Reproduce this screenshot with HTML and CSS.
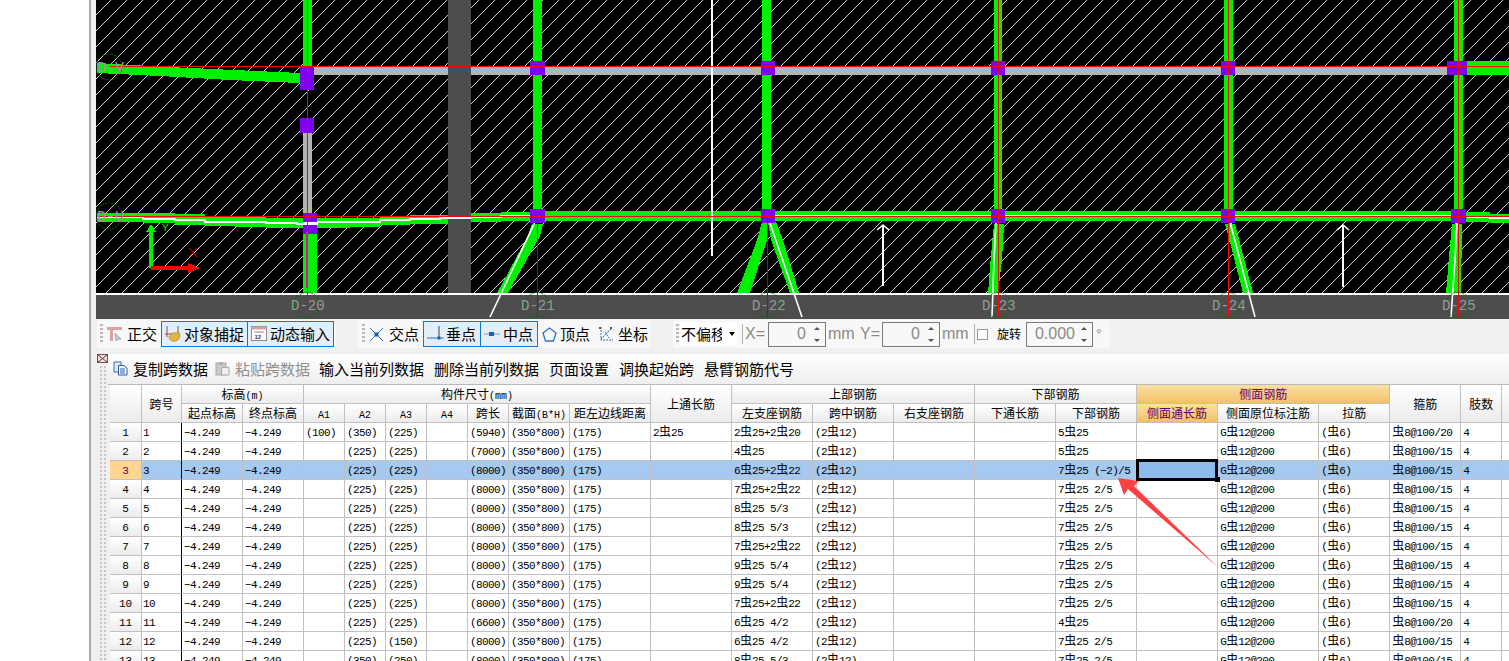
FILE: index.html
```html
<!DOCTYPE html>
<html lang="zh">
<head>
<meta charset="utf-8">
<title>梁平法表格</title>
<link rel="stylesheet" href="styles.css">
</head>
<body>
<div class="side"></div>
<div class="main">
  <svg class="canvas" width="1413" height="319" viewBox="96 0 1413 319" shape-rendering="crispEdges">
    <defs>
      <pattern id="hatch" patternUnits="userSpaceOnUse" width="16" height="16" patternTransform="translate(-1 0)">
        <path d="M0 16L16 0" stroke="#d0d0d0" stroke-width="1"/>
      </pattern>
    </defs>
    <rect x="96" y="0" width="1413" height="319" fill="#000"/>
    <rect x="96" y="0" width="1413" height="293" fill="url(#hatch)"/>
    <rect x="448" y="0" width="23" height="293" fill="#4d4d4d"/>

    <g fill="#00f000">
      <rect x="303" y="0" width="9" height="67"/>
      <rect x="533" y="0" width="9" height="212"/>
      <rect x="762" y="0" width="9" height="212"/>
      <rect x="994" y="0" width="8" height="212"/>
      <rect x="1224" y="0" width="9" height="212"/>
      <rect x="1454" y="0" width="9" height="212"/>
      <rect x="303" y="234" width="14" height="59"/>
      <path d="M97 63L132 65L190 68L300 73V83L230 80L160 76L97 73Z"/>
      <rect x="1467" y="61" width="42" height="14"/>
      <path d="M97 213H175V214H205V216H235V217H266V218H303V228H266V227H235V226H205V225H175V223H143V222H97Z"/>
      <path d="M317 218H350V218H380V217H410V215H448V224H410V225H380V227H350V228H317Z"/>
      <rect x="471" y="213" width="30" height="9"/>
      <rect x="501" y="212" width="30" height="9"/>
      <rect x="545" y="211" width="906" height="10"/>
      <path d="M1466 212H1490V214H1509V223H1490V222H1466Z"/>
      <path d="M532 224H543L540 236L508 293H497L528 236Z"/>
      <path d="M762 222H767V240L750 293H737L757 240Z"/>
      <path d="M768 222H776L783 240L799 293H790L771 240Z"/>
      <path d="M994 224H1004L1002 260L998 293H988L991 255Z"/>
      <path d="M1225 224H1235L1240 243L1253 293H1243L1232 250Z"/>
      <path d="M1452 224H1462L1461 293H1446L1450 245Z"/>
    </g>

    <g fill="#b4b4b4">
      <rect x="314" y="67" width="134" height="8"/>
      <rect x="471" y="67" width="59" height="8"/>
      <rect x="545" y="67" width="216" height="8"/>
      <rect x="775" y="67" width="216" height="8"/>
      <rect x="1005" y="67" width="216" height="8"/>
      <rect x="1235" y="67" width="212" height="8"/>
      <rect x="303" y="133" width="9" height="80"/>
    </g>

    <rect x="96" y="293" width="1413" height="2" fill="#fff"/>
    <rect x="96" y="295" width="1413" height="24" fill="#4d4d4d"/>

    <g fill="none" stroke="#fff" stroke-width="2">
      <path d="M712 0V256"/>
      <path d="M883 286V225M1343 287V225"/>
    </g>
    <g fill="none" stroke="#fff" stroke-width="1.600" shape-rendering="geometricPrecision">
      <path d="M877 230L883 225L889 230"/>
      <path d="M1337 230L1343 225L1349 230"/>
      <path d="M535 222L490 317"/>
      <path d="M768 217L802 317"/>
      <path d="M996 222L994 260L992 317"/>
      <path d="M1230 222L1255 317"/>
      <path d="M1457 222L1455 260L1451 317"/>
    </g>
    <path d="M97 217H143V219H175V220H205V222H266V223H297V224H317V222H380V220H410V219H440V218H470V217H501V216H533M1467 217H1490V218H1509" fill="none" stroke="#fff" stroke-width="2"/>
    <rect x="771" y="215" width="685" height="1" fill="#fff"/>

    <g fill="#8000f0">
      <rect x="300" y="66" width="14" height="24"/>
      <rect x="300" y="118" width="14" height="15"/>
      <rect x="303" y="213" width="14" height="21"/>
      <rect x="530" y="61" width="15" height="14"/>
      <rect x="530" y="209" width="15" height="14"/>
      <rect x="761" y="61" width="14" height="14"/>
      <rect x="761" y="209" width="14" height="14"/>
      <rect x="991" y="61" width="14" height="14"/>
      <rect x="991" y="209" width="14" height="14"/>
      <rect x="1221" y="61" width="14" height="14"/>
      <rect x="1221" y="209" width="14" height="14"/>
      <rect x="1447" y="61" width="20" height="14"/>
      <rect x="1451" y="209" width="15" height="14"/>
    </g>
    <rect x="303" y="222" width="14" height="3" fill="#fff"/>

    <g fill="#f00">
      <rect x="110" y="66" width="1399" height="1"/>
      <rect x="97" y="216" width="1412" height="1"/>
      <rect x="307" y="0" width="1" height="317"/>
      <rect x="537" y="216" width="1" height="101" fill="#c00000"/>
      <rect x="767" y="216" width="1" height="101" fill="#c00000"/>
      <rect x="998" y="0" width="1" height="317"/>
      <rect x="1228" y="0" width="1" height="317"/>
      <rect x="1458" y="0" width="1" height="317"/>
    </g>
    <rect x="306" y="232" width="2" height="56" fill="#f000c0"/>

    <path d="M151 268V228" stroke="#00f000" stroke-width="4" fill="none"/>
    <path d="M146 232L151 224L156 232Z" fill="#00f000"/>
    <path d="M151 268H190" stroke="#f00" stroke-width="4" fill="none"/>
    <path d="M188 263L200 268L188 273Z" fill="#f00"/>
    <path d="M189 248L197 257M197 248L189 257" stroke="#d00000" fill="none" shape-rendering="geometricPrecision"/>
    <text x="162" y="231" class="axis-y">Y</text>

    <g fill="none" stroke="#007000" stroke-dasharray="2 1" shape-rendering="geometricPrecision">
      <circle cx="109" cy="67" r="13"/>
      <circle cx="109" cy="216" r="13"/>
      <circle cx="307" cy="305" r="12.500"/>
      <circle cx="537" cy="305" r="12.500"/>
      <circle cx="768" cy="305" r="12.500"/>
      <circle cx="998" cy="305" r="12.500"/>
      <circle cx="1228" cy="305" r="12.500"/>
      <circle cx="1458" cy="305" r="12.500"/>
    </g>
    <text x="97" y="72" class="axis-row">D-V</text>
    <text x="97" y="221" class="axis-row">D-U</text>
    <text x="291" y="310" class="axis-col">D-20</text>
    <text x="521" y="310" class="axis-col">D-21</text>
    <text x="752" y="310" class="axis-col">D-22</text>
    <text x="982" y="310" class="axis-col">D-23</text>
    <text x="1212" y="310" class="axis-col">D-24</text>
    <text x="1442" y="310" class="axis-col">D-25</text>
  </svg>

  <div class="toolbar">
    <div class="tgroup g1">
      <span class="grip"></span>
      <svg class="ic ic-first" width="16" height="16" viewBox="0 0 16 16"><path d="M0 1H15V4H6V15H3V4H0Z" fill="#dba3a3"/><path d="M8 7L14 13L11 13.500L9 15Z" fill="#c5ccd6" stroke="#7d8794" stroke-width=".6"/></svg>
      <span class="tlabel">正交</span>
      <button class="tbtn w86 first-btn" type="button">
        <svg width="18" height="18" viewBox="0 0 18 18"><path d="M3 1V12M14 1V12M1 9H16" stroke="#9c4a3c" fill="none"/><path d="M5 12C6 8 11 7 15 8C17 10 16 15 12 16C8 17 5 15 5 12Z" fill="#e0b642" stroke="#a78128" stroke-width=".6"/></svg>
        <span>对象捕捉</span>
      </button>
      <button class="tbtn w87" type="button">
        <svg width="18" height="18" viewBox="0 0 18 18"><rect x="1.500" y="1.500" width="15" height="14" fill="#fff" stroke="#8a8a8a"/><rect x="1.500" y="1.500" width="15" height="3" fill="#d8a0a0"/><path d="M4 7H14" stroke="#8a8a8a"/><text x="4.500" y="14" class="ic-num">12</text></svg>
        <span>动态输入</span>
      </button>
    </div>
    <div class="tgroup g2">
      <span class="grip"></span>
      <svg class="ic ic-x" width="15" height="15" viewBox="0 0 15 15"><path d="M1 1L14 14M14 1L1 14" stroke="#2f74c0" fill="none"/><rect x="5.500" y="5.500" width="4" height="4" fill="#1d5fae"/></svg>
      <span class="tlabel">交点</span>
      <button class="tbtn w57 first-btn" type="button">
        <svg width="18" height="18" viewBox="0 0 18 18"><path d="M1 13H18" stroke="#2f74c0"/><path d="M13 1V13" stroke="#444"/><rect x="11.500" y="11.500" width="3" height="3" fill="#1d5fae"/></svg>
        <span>垂点</span>
      </button>
      <button class="tbtn w57" type="button">
        <svg width="18" height="18" viewBox="0 0 18 18"><path d="M1 9H17" stroke="#7a9cc4"/><rect x="6" y="7" width="5" height="4" fill="#1d5fae"/></svg>
        <span>中点</span>
      </button>
      <svg class="ic ic-pent" width="15" height="15" viewBox="0 0 15 15"><path d="M7.500 1L14 6L11.500 14H3.500L1 6Z" fill="none" stroke="#2f74c0" stroke-width="1.300"/></svg>
      <span class="tlabel">顶点</span>
      <svg class="ic ic-coord" width="16" height="16" viewBox="0 0 16 16"><path d="M3 1V14H15" stroke="#2f74c0" stroke-dasharray="2 1" fill="none"/><path d="M3 13L13 3M7 6L11 12" stroke="#1d5fae" stroke-dasharray="2 1" fill="none"/><rect x="12" y="1" width="2" height="2" fill="#555"/><rect x="1" y="1" width="2" height="2" fill="#555"/></svg>
      <span class="tlabel">坐标</span>
    </div>
    <div class="tgroup g3">
      <span class="grip"></span>
      <div class="combo"><span class="combo-text">不偏移</span><span class="caret"></span></div>
      <span class="sep"></span>
      <span class="glabel lx">X=</span>
      <div class="spin w58"><span>0</span><i class="arrows"></i></div>
      <span class="glabel lmm">mm</span>
      <span class="glabel ly">Y=</span>
      <div class="spin w58"><span>0</span><i class="arrows"></i></div>
      <span class="glabel lmm">mm</span>
      <span class="sep sep2"></span>
      <span class="check"></span>
      <span class="rot">旋转</span>
      <div class="spin w67"><span>0.000</span><i class="arrows"></i></div>
      <span class="glabel deg">°</span>
    </div>
  </div>

  <div class="panel">
    <div class="rail">
      <svg width="11" height="9" viewBox="0 0 11 9" class="closer"><rect x=".5" y=".5" width="10" height="8" fill="#f3dede" stroke="#7b4a4a"/><path d="M1 1L10 8M10 1L1 8" stroke="#5b3a3a"/></svg>
      <div class="dots"></div>
    </div>
    <div class="sheet">
      <div class="actions">
        <svg width="15" height="15" viewBox="0 0 15 15"><path d="M1 1H8V11H1Z" fill="#dfe9f6" stroke="#3b6eb0"/><path d="M5.500 4.500H11L14 7V14H5.500Z" fill="#fff" stroke="#2a5ca0"/><path d="M7 8H12M7 10H12M7 12H12" stroke="#2a5ca0"/></svg>
        <span class="act a1">复制跨数据</span>
        <svg class="a-paste" width="15" height="15" viewBox="0 0 15 15"><rect x="1" y="2" width="10" height="12" fill="#c9c9c9" stroke="#a8a8a8"/><rect x="4" y="1" width="4" height="3" fill="#b0b0b0"/><path d="M6.500 6.500H14V14H6.500Z" fill="#eee" stroke="#aaa"/></svg>
        <span class="act a1 off">粘贴跨数据</span>
        <span class="act a3">输入当前列数据</span>
        <span class="act">删除当前列数据</span>
        <span class="act">页面设置</span>
        <span class="act">调换起始跨</span>
        <span class="act">悬臂钢筋代号</span>
      </div>
      <table class="grid">
        <colgroup>
          <col class="c32"><col class="c40"><col class="c61"><col class="c61">
          <col class="c41"><col class="c41"><col class="c41"><col class="c41"><col class="c41">
          <col class="c61"><col class="c81"><col class="c81"><col class="c81"><col class="c81"><col class="c81"><col class="c81"><col class="c81"><col class="c81">
          <col class="c101"><col class="c71"><col class="c71"><col class="c41"><col class="c41">
        </colgroup>
        <thead>
          <tr>
            <th rowspan="2"></th>
            <th rowspan="2">跨号</th>
            <th colspan="2">标高<span class="m">(m)</span></th>
            <th colspan="7">构件尺寸<span class="m">(mm)</span></th>
            <th rowspan="2">上通长筋</th>
            <th colspan="3">上部钢筋</th>
            <th colspan="2">下部钢筋</th>
            <th colspan="3" class="hot">侧面钢筋</th>
            <th rowspan="2">箍筋</th>
            <th rowspan="2">肢数</th>
            <th rowspan="2"></th>
          </tr>
          <tr>
            <th>起点标高</th><th>终点标高</th>
            <th><span class="m">A1</span></th><th><span class="m">A2</span></th><th><span class="m">A3</span></th><th><span class="m">A4</span></th>
            <th>跨长</th><th>截面<span class="m">(B*H)</span></th><th>距左边线距离</th>
            <th>左支座钢筋</th><th>跨中钢筋</th><th>右支座钢筋</th>
            <th>下通长筋</th><th>下部钢筋</th>
            <th class="hot">侧面通长筋</th><th>侧面原位标注筋</th><th>拉筋</th>
          </tr>
        </thead>
        <tbody>
          <tr><th>1</th><td class="frz">1</td><td>−4.249</td><td>−4.249</td><td>(100)</td><td>(350)</td><td>(225)</td><td></td><td>(5940)</td><td>(350*800)</td><td>(175)</td><td>2<b>虫</b>25</td><td>2<b>虫</b>25+2<b>虫</b>20</td><td>(2<b>虫</b>12)</td><td></td><td></td><td>5<b>虫</b>25</td><td></td><td>G<b>虫</b>12@200</td><td>(<b>虫</b>6)</td><td><b>虫</b>8@100/20</td><td>4</td><td></td></tr>
          <tr><th>2</th><td class="frz">2</td><td>−4.249</td><td>−4.249</td><td></td><td>(225)</td><td>(225)</td><td></td><td>(7000)</td><td>(350*800)</td><td>(175)</td><td></td><td>4<b>虫</b>25</td><td>(2<b>虫</b>12)</td><td></td><td></td><td>5<b>虫</b>25</td><td></td><td>G<b>虫</b>12@200</td><td>(<b>虫</b>6)</td><td><b>虫</b>8@100/15</td><td>4</td><td></td></tr>
          <tr class="sel"><th>3</th><td class="frz">3</td><td>−4.249</td><td>−4.249</td><td></td><td>(225)</td><td>(225)</td><td></td><td>(8000)</td><td>(350*800)</td><td>(175)</td><td></td><td>6<b>虫</b>25+2<b>虫</b>22</td><td>(2<b>虫</b>12)</td><td></td><td></td><td>7<b>虫</b>25 (−2)/5</td><td class="active"></td><td>G<b>虫</b>12@200</td><td>(<b>虫</b>6)</td><td><b>虫</b>8@100/15</td><td>4</td><td></td></tr>
          <tr><th>4</th><td class="frz">4</td><td>−4.249</td><td>−4.249</td><td></td><td>(225)</td><td>(225)</td><td></td><td>(8000)</td><td>(350*800)</td><td>(175)</td><td></td><td>7<b>虫</b>25+2<b>虫</b>22</td><td>(2<b>虫</b>12)</td><td></td><td></td><td>7<b>虫</b>25 2/5</td><td></td><td>G<b>虫</b>12@200</td><td>(<b>虫</b>6)</td><td><b>虫</b>8@100/15</td><td>4</td><td></td></tr>
          <tr><th>5</th><td class="frz">5</td><td>−4.249</td><td>−4.249</td><td></td><td>(225)</td><td>(225)</td><td></td><td>(8000)</td><td>(350*800)</td><td>(175)</td><td></td><td>8<b>虫</b>25 5/3</td><td>(2<b>虫</b>12)</td><td></td><td></td><td>7<b>虫</b>25 2/5</td><td></td><td>G<b>虫</b>12@200</td><td>(<b>虫</b>6)</td><td><b>虫</b>8@100/15</td><td>4</td><td></td></tr>
          <tr><th>6</th><td class="frz">6</td><td>−4.249</td><td>−4.249</td><td></td><td>(225)</td><td>(225)</td><td></td><td>(8000)</td><td>(350*800)</td><td>(175)</td><td></td><td>8<b>虫</b>25 5/3</td><td>(2<b>虫</b>12)</td><td></td><td></td><td>7<b>虫</b>25 2/5</td><td></td><td>G<b>虫</b>12@200</td><td>(<b>虫</b>6)</td><td><b>虫</b>8@100/15</td><td>4</td><td></td></tr>
          <tr><th>7</th><td class="frz">7</td><td>−4.249</td><td>−4.249</td><td></td><td>(225)</td><td>(225)</td><td></td><td>(8000)</td><td>(350*800)</td><td>(175)</td><td></td><td>7<b>虫</b>25+2<b>虫</b>22</td><td>(2<b>虫</b>12)</td><td></td><td></td><td>7<b>虫</b>25 2/5</td><td></td><td>G<b>虫</b>12@200</td><td>(<b>虫</b>6)</td><td><b>虫</b>8@100/15</td><td>4</td><td></td></tr>
          <tr><th>8</th><td class="frz">8</td><td>−4.249</td><td>−4.249</td><td></td><td>(225)</td><td>(225)</td><td></td><td>(8000)</td><td>(350*800)</td><td>(175)</td><td></td><td>9<b>虫</b>25 5/4</td><td>(2<b>虫</b>12)</td><td></td><td></td><td>7<b>虫</b>25 2/5</td><td></td><td>G<b>虫</b>12@200</td><td>(<b>虫</b>6)</td><td><b>虫</b>8@100/15</td><td>4</td><td></td></tr>
          <tr><th>9</th><td class="frz">9</td><td>−4.249</td><td>−4.249</td><td></td><td>(225)</td><td>(225)</td><td></td><td>(8000)</td><td>(350*800)</td><td>(175)</td><td></td><td>9<b>虫</b>25 5/4</td><td>(2<b>虫</b>12)</td><td></td><td></td><td>7<b>虫</b>25 2/5</td><td></td><td>G<b>虫</b>12@200</td><td>(<b>虫</b>6)</td><td><b>虫</b>8@100/15</td><td>4</td><td></td></tr>
          <tr><th>10</th><td class="frz">10</td><td>−4.249</td><td>−4.249</td><td></td><td>(225)</td><td>(225)</td><td></td><td>(8000)</td><td>(350*800)</td><td>(175)</td><td></td><td>7<b>虫</b>25+2<b>虫</b>22</td><td>(2<b>虫</b>12)</td><td></td><td></td><td>7<b>虫</b>25 2/5</td><td></td><td>G<b>虫</b>12@200</td><td>(<b>虫</b>6)</td><td><b>虫</b>8@100/15</td><td>4</td><td></td></tr>
          <tr><th>11</th><td class="frz">11</td><td>−4.249</td><td>−4.249</td><td></td><td>(225)</td><td>(225)</td><td></td><td>(6600)</td><td>(350*800)</td><td>(175)</td><td></td><td>6<b>虫</b>25 4/2</td><td>(2<b>虫</b>12)</td><td></td><td></td><td>4<b>虫</b>25</td><td></td><td>G<b>虫</b>12@200</td><td>(<b>虫</b>6)</td><td><b>虫</b>8@100/20</td><td>4</td><td></td></tr>
          <tr><th>12</th><td class="frz">12</td><td>−4.249</td><td>−4.249</td><td></td><td>(225)</td><td>(150)</td><td></td><td>(8000)</td><td>(350*800)</td><td>(175)</td><td></td><td>6<b>虫</b>25 4/2</td><td>(2<b>虫</b>12)</td><td></td><td></td><td>7<b>虫</b>25 2/5</td><td></td><td>G<b>虫</b>12@200</td><td>(<b>虫</b>6)</td><td><b>虫</b>8@100/15</td><td>4</td><td></td></tr>
          <tr><th>13</th><td class="frz">13</td><td>−4.249</td><td>−4.249</td><td></td><td>(350)</td><td>(250)</td><td></td><td>(8000)</td><td>(350*800)</td><td>(175)</td><td></td><td>8<b>虫</b>25 5/3</td><td>(2<b>虫</b>12)</td><td></td><td></td><td>7<b>虫</b>25 2/5</td><td></td><td>G<b>虫</b>12@200</td><td>(<b>虫</b>6)</td><td><b>虫</b>8@100/15</td><td>4</td><td></td></tr>
        </tbody>
      </table>
    </div>
  </div>
</div>
<svg class="callout" width="112" height="100" viewBox="1112 472 112 100"><path d="M1118 478L1139 481L1134 486L1219 568L1128 489L1124 495Z" fill="#ff4040"/></svg>
</body>
</html>
```
FILE: styles.css
```css
* { box-sizing: border-box; }
html, body { margin: 0; height: 661px; overflow: hidden; }
body {
  position: relative;
  display: flex;
  background: #fff;
  font-family: "Noto Sans CJK SC", "Liberation Sans", sans-serif;
  color: #000;
}
.side { flex: none; background: #fff; border-right: 2px solid #a9a9a9; width: 91px; }
.main { width: 1418px; flex: none; padding-left: 5px; background: #f0f0f0; height: 661px; overflow: hidden; }

.canvas { display: block; }
.axis-y { font: 11px "Liberation Mono", monospace; fill: #00f000; }
.axis-row { font: 15px "Liberation Mono", monospace; fill: #c080c8; }
.axis-col { font: 14px "Liberation Mono", monospace; fill: #9a9a9a; }
.ic-num { font: 700 6px "Liberation Sans", sans-serif; fill: #333; }

.toolbar { display: flex; height: 30px; margin-left: 1px; padding-top: 1px; }
.tgroup { display: flex; align-items: center; height: 28px; background: #f8f8f8; border-radius: 2px; font-size: 15px; line-height: 20px; }
.grip {
  width: 3px; height: 20px; flex: none; margin-left: 3px;
  background: repeating-linear-gradient(to bottom, #b8b8b8 0 2px, transparent 2px 4px);
}
.g1 { width: 239px; }
.g2 { width: 293px; margin-left: 22px; }
.g3 { margin-left: 22px; padding-right: 8px; }
.g2 .grip { margin-left: 4px; }
.ic { flex: none; }
.ic-first { margin-left: 4px; }
.tlabel { margin-left: 4px; white-space: nowrap; }
.ic-x { margin: 0 0 0 4px; }
.ic-x + .tlabel { margin-left: 5px; }
.ic-pent { margin-left: 4px; }
.ic-pent + .tlabel { margin-left: 3px; }
.ic-coord { margin-left: 8px; }
.tbtn {
  display: flex; align-items: center; gap: 2px; height: 26px; padding: 0 0 0 2px;
  background: #e3eef8; border: 1px solid #0a78d4; font: inherit; color: #000; white-space: nowrap;
}
.first-btn { margin-left: 4px; }
.w86 { width: 87px; }
.w87 { width: 87px; }
.w57 { width: 58px; }
.w57 + .w57 { margin-left: -1px; }
.w87 { margin-left: -1px; }

.combo { position: relative; width: 57px; height: 22px; margin-left: 1px; background: #fff; overflow: hidden; }
.combo-text { position: absolute; left: 1px; top: 1px; width: 41px; height: 20px; overflow: hidden; white-space: nowrap; }
.caret { position: absolute; right: 2px; top: 9px; width: 0; height: 0; border: 3px solid transparent; border-top: 4px solid #000; border-bottom: 0; }
.sep { width: 1px; height: 20px; background: #b0b0b0; margin-left: 5px; }
.glabel { font-family: "Liberation Sans", sans-serif; font-size: 16px; color: #8a8a8a; white-space: nowrap; }
.lx { margin-left: 2px; width: 23px; }
.ly { margin-left: 4px; width: 22px; }
.lmm { margin-left: 2px; width: 28px; }
.sep2 { margin-left: 4px; }
.check { width: 11px; height: 11px; margin-left: 2px; border: 1px solid #9a9a9a; background: #fff; }
.rot { font-size: 12px; margin-left: 9px; width: 29px; }
.deg { margin-left: 3px; font-size: 14px; }
.spin {
  position: relative; display: flex; align-items: center; justify-content: flex-end; height: 25px;
  border: 1px solid #7a7a7a; background: #f8f8f8;
  font-family: "Liberation Sans", sans-serif; font-size: 16px; color: #8a8a8a; padding-right: 19px;
}
.w58 { width: 58px; }
.w67 { width: 67px; padding-right: 17px; }
.arrows { position: absolute; right: 3px; top: 3px; width: 9px; height: 17px; }
.arrows::before, .arrows::after { content: ""; position: absolute; left: 1px; width: 0; height: 0; border-left: 3px solid transparent; border-right: 3px solid transparent; }
.arrows::before { top: 1px; border-bottom: 3px solid #555; }
.arrows::after { bottom: 1px; border-top: 3px solid #555; }

.panel { display: flex; height: 312px; padding-top: 5px; }
.rail { width: 11px; flex: none; margin-left: 1px; }
.closer { display: block; background: #f0f0f0; }
.dots {
  width: 8px; height: 296px; margin: 3px 0 0 1px;
  background: conic-gradient(#c6c6c6 25%, transparent 0) 0 0 / 4px 4px;
}
.sheet { width: 1401px; flex: none; overflow: hidden; }
.actions {
  display: flex; align-items: center; height: 31px; padding: 0 0 2px 5px; font-size: 15px; white-space: nowrap;
  background: linear-gradient(#ffffff, #eeeeee); border-bottom: 1px solid #b9b9b9;
}
.act { margin-left: 10px; }
.a1 { margin-left: 5px; }
.off { color: #8f8f8f; }
.a-paste { margin-left: 7px; }
.a3 { margin-left: 9px; }

.grid {
  table-layout: fixed; width: 1433px; margin-left: 2px; border-collapse: separate; border-spacing: 0;
  font-family: "Liberation Mono", monospace; font-size: 11px; letter-spacing: -0.6px;
  background: #fff;
}
.c32 { width: 32px; } .c40 { width: 40px; } .c41 { width: 41px; } .c61 { width: 61px; }
.c71 { width: 71px; } .c81 { width: 81px; } .c101 { width: 101px; }
.grid th, .grid td {
  height: 19px; padding: 2px 0 0; border-right: 1px solid #c0c0c0; border-bottom: 1px solid #c0c0c0;
  font-weight: 400; white-space: nowrap; line-height: 14px;
}
.grid td { padding-left: 2px; }
.grid thead th { padding-top: 0; }
.grid thead th, .grid tbody th {
  background: linear-gradient(#ffffff, #ececec); text-align: center;
  font-family: "Noto Sans CJK SC", sans-serif; font-size: 12px; letter-spacing: 0;
}
.grid tbody th { font-family: "Liberation Mono", monospace; font-size: 11px; }
.m { font-family: "Liberation Mono", monospace; font-size: 10px; letter-spacing: 0; line-height: 0; }
.grid b { font: 400 12px/0 "Noto Sans CJK SC", sans-serif; letter-spacing: 0; }
.grid .frz { border-right-color: #000; padding-left: 1px; }
.grid thead .hot { background: linear-gradient(#fbdfa6, #f3c165); color: #660066; }
.sel td { background: #a6c9ef; }
.grid .sel th { background: #ffd591; color: #660066; }
.grid td.active { position: relative; overflow: visible; background: #8dbbec; }
.active::after { content: ""; position: absolute; left: -1px; top: -2px; right: -1px; bottom: -2px; border: 3px solid #000; }
.active::before { content: ""; position: absolute; right: -3px; bottom: -3px; width: 5px; height: 5px; background: #000; z-index: 1; }

.callout { position: absolute; left: 1112px; top: 472px; }
```
